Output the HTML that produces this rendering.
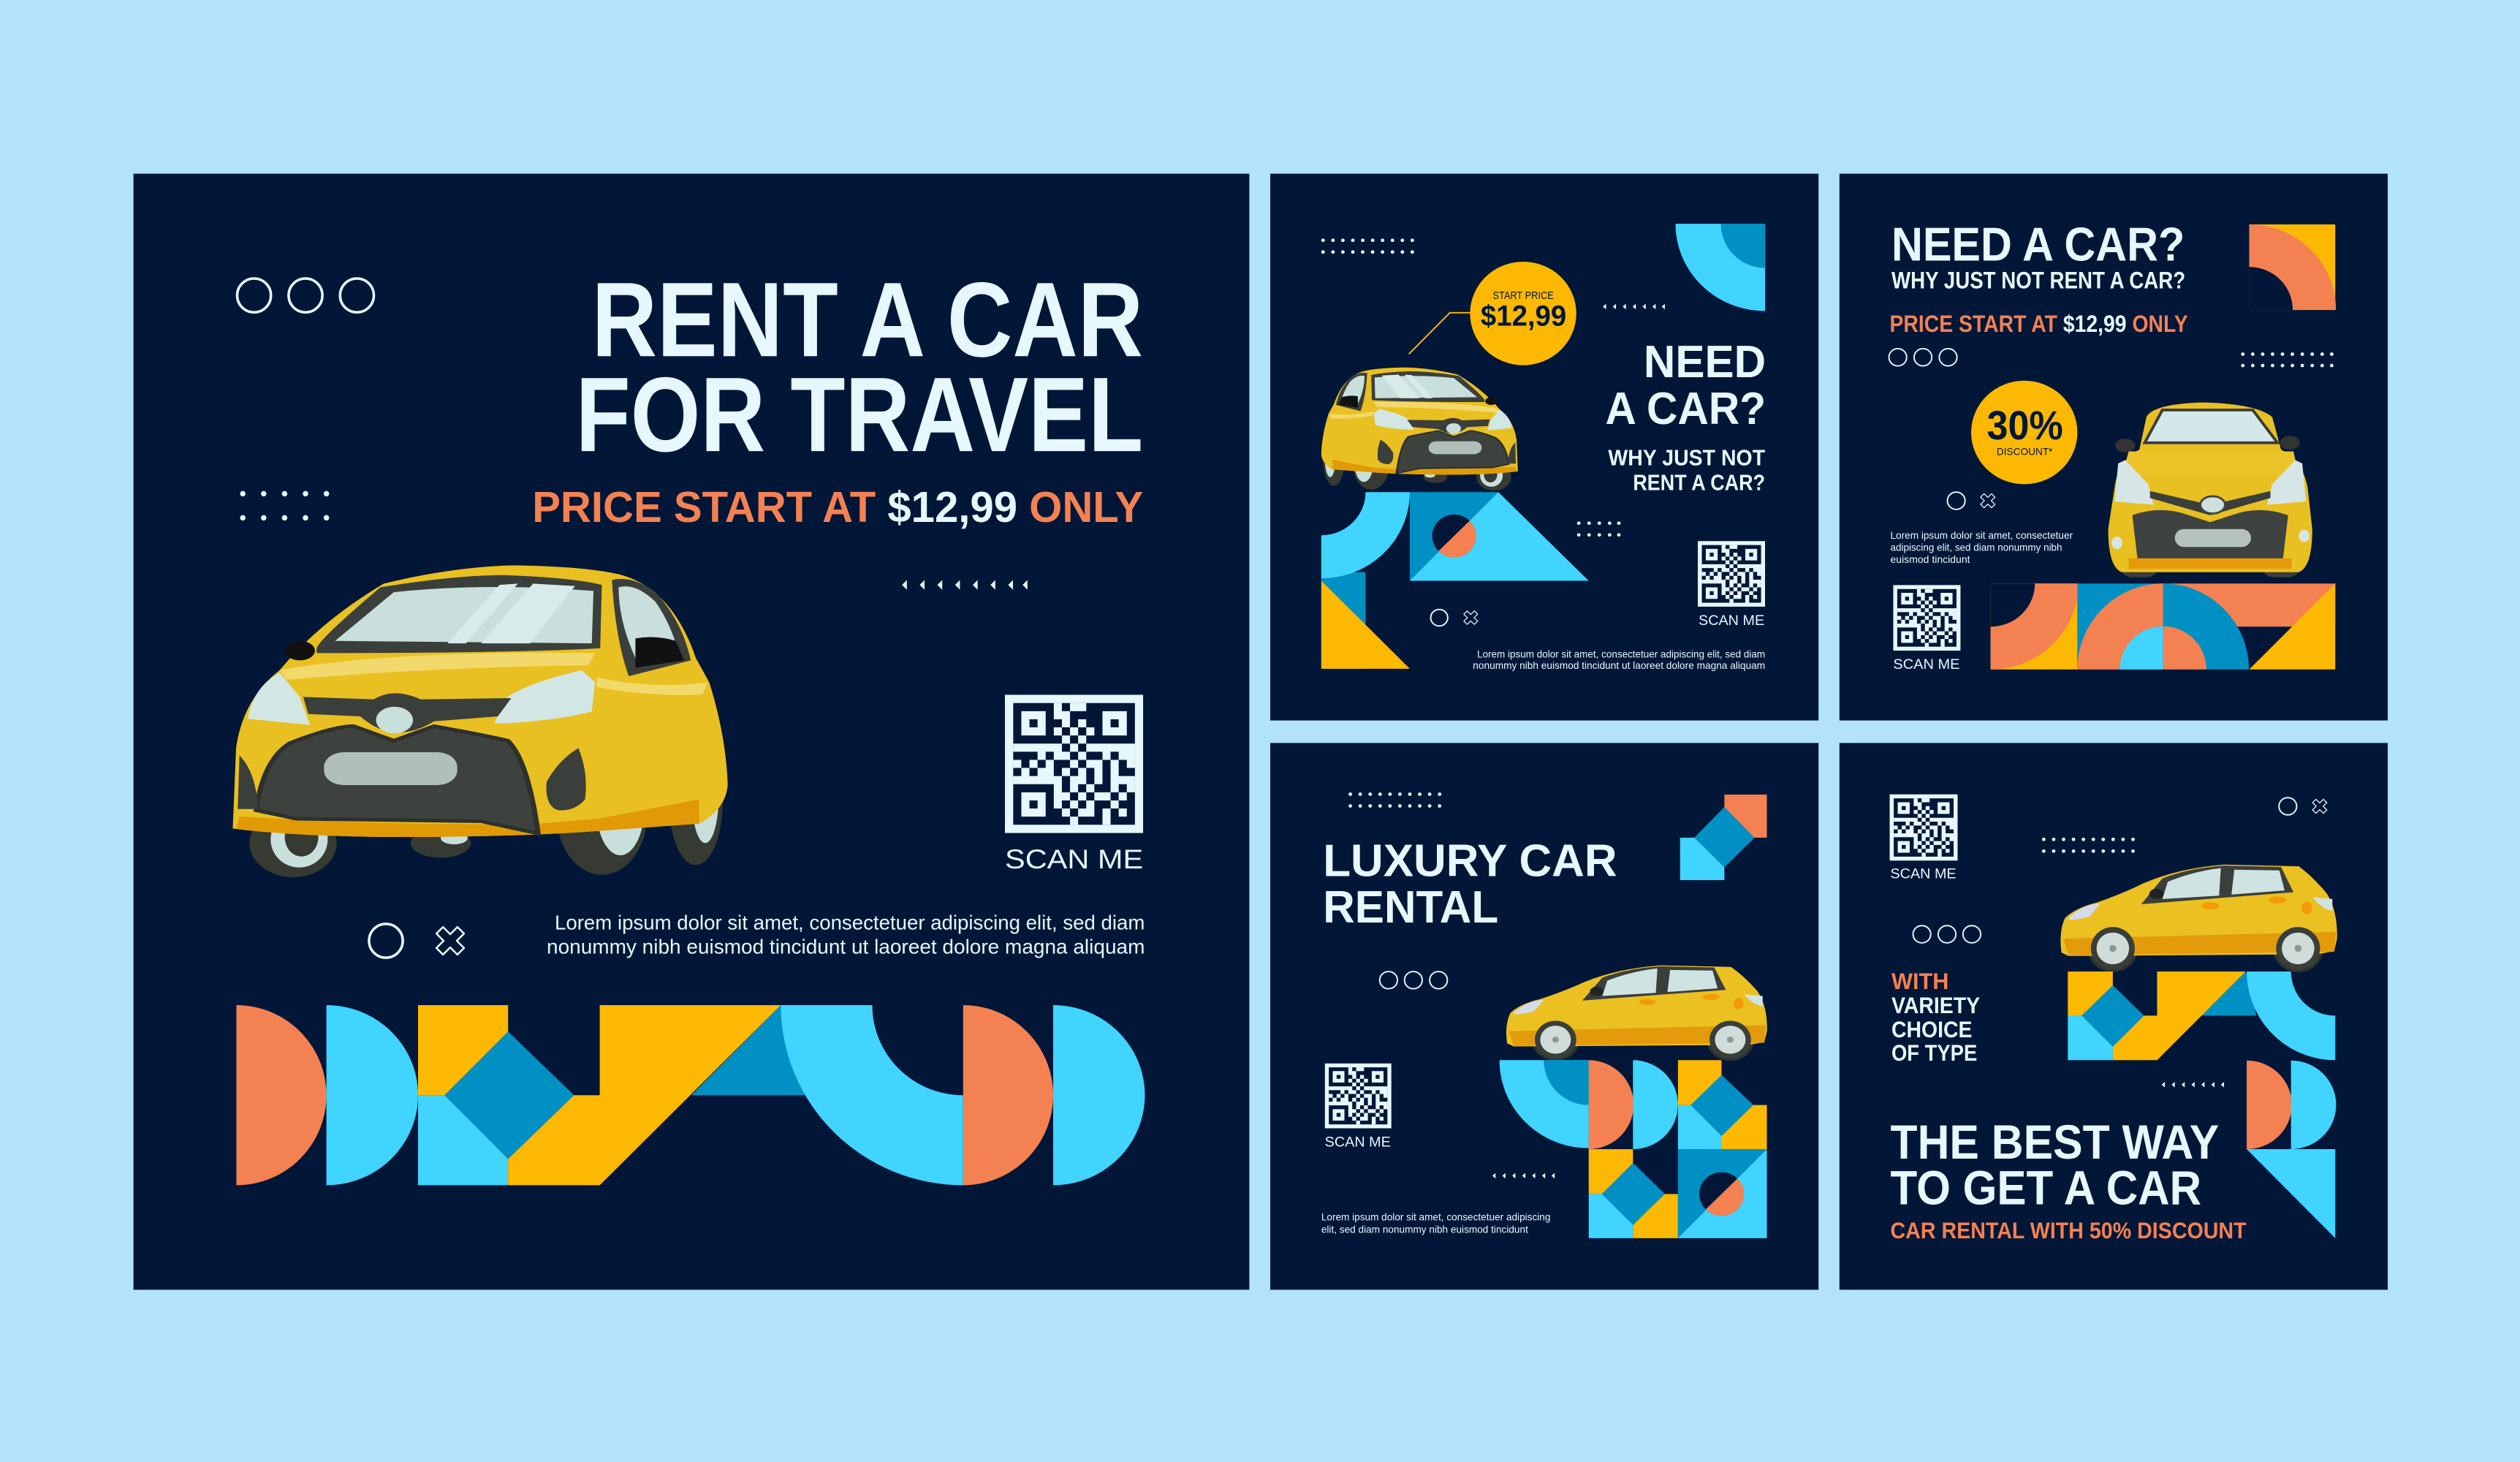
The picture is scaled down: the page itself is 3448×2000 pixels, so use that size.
<!DOCTYPE html>
<html><head><meta charset="utf-8"><style>
html,body{margin:0;padding:0;background:#b3e2fd;}
svg{display:block;}
text{font-family:"Liberation Sans",sans-serif;font-weight:bold;}
</style></head><body>
<svg width="3448" height="2000" viewBox="0 0 1567.27 909.09" preserveAspectRatio="none" xmlns="http://www.w3.org/2000/svg">
<defs>
<symbol id="qr" viewBox="0 0 100 100">
<rect width="100" height="100" fill="#e6f8fd"/>
<rect x="6" y="6" width="88" height="88" fill="#021738"/>
<g transform="translate(6,6) scale(5.867)" fill="#e6f8fd">
<path d="M5,0h1v1h-1zM7,0h2v1h-2z M1,1h3v1h-3zM5,1h2v1h-2zM11,1h3v1h-3z M1,2h1v1h-1zM3,2h1v1h-1zM6,2h1v1h-1zM8,2h1v1h-1zM11,2h1v1h-1zM13,2h1v1h-1z M1,3h3v1h-3zM5,3h1v1h-1zM7,3h1v1h-1zM9,3h1v1h-1zM11,3h3v1h-3z M6,4h1v1h-1zM8,4h1v1h-1z M0,5h6v1h-6zM7,5h1v1h-1zM9,5h6v1h-6z M3,6h1v1h-1zM5,6h2v1h-2zM8,6h1v1h-1zM11,6h1v1h-1zM13,6h2v1h-2z M0,7h1v1h-1zM2,7h1v1h-1zM4,7h1v1h-1zM7,7h1v1h-1zM9,7h2v1h-2zM12,7h1v1h-1zM14,7h1v1h-1z M1,8h1v1h-1zM3,8h2v1h-2zM6,8h1v1h-1zM8,8h1v1h-1zM10,8h1v1h-1zM12,8h1v1h-1z M0,9h6v1h-6zM7,9h2v1h-2zM10,9h1v1h-1zM12,9h3v1h-3z M5,10h1v1h-1zM7,10h1v1h-1zM9,10h1v1h-1zM12,10h1v1h-1zM14,10h1v1h-1z M1,11h3v1h-3zM5,11h2v1h-2zM8,11h1v1h-1zM10,11h2v1h-2zM13,11h1v1h-1z M1,12h1v1h-1zM3,12h1v1h-1zM5,12h1v1h-1zM7,12h1v1h-1zM9,12h1v1h-1zM12,12h1v1h-1z M1,13h3v1h-3zM6,13h1v1h-1zM8,13h2v1h-2zM11,13h1v1h-1zM13,13h1v1h-1z M7,14h1v1h-1zM11,14h1v1h-1z"/>
</g>
</symbol>
<symbol id="xi" viewBox="-1.25 -1.25 2.5 2.5" overflow="visible">
<polygon transform="rotate(45)" points="-0.33,-1.05 0.33,-1.05 0.33,-0.33 1.05,-0.33 1.05,0.33 0.33,0.33 0.33,1.05 -0.33,1.05 -0.33,0.33 -1.05,0.33 -1.05,-0.33 -0.33,-0.33" fill="none" stroke="#e6f8fd" stroke-width="0.13" stroke-linejoin="round"/>
</symbol>
<g id="car3q">
<ellipse cx="220" cy="1240" rx="130" ry="140" fill="#363a33"/>
<ellipse cx="238" cy="1225" rx="85" ry="115" fill="#c8dfdc"/>
<ellipse cx="245" cy="1215" rx="50" ry="80" fill="#363a33"/>
<ellipse cx="660" cy="1240" rx="90" ry="60" fill="#363a33"/>
<ellipse cx="700" cy="1220" rx="40" ry="25" fill="#c8dfdc"/>
<ellipse cx="1420" cy="1070" rx="80" ry="260" fill="#363a33"/>
<ellipse cx="1448" cy="1050" rx="40" ry="190" fill="#c8dfdc"/>
<ellipse cx="1140" cy="1120" rx="135" ry="250" fill="#363a33"/>
<ellipse cx="1195" cy="1090" rx="72" ry="200" fill="#c8dfdc"/>
<path d="M40,1180 L50,850 Q70,650 180,530 Q300,330 490,175 Q700,105 880,100 Q1100,105 1200,140 Q1350,200 1420,480 L1460,580 Q1510,800 1515,1000 Q1510,1100 1430,1160 L1130,1190 Q900,1215 500,1215 Q200,1210 40,1180 Z" fill="#e9c021"/>
<path d="M60,1130 Q500,1170 950,1160 L1130,1140 L1430,1060 L1430,1160 L1130,1190 Q900,1215 500,1215 Q200,1210 50,1180 Z" fill="#e09a05"/>
<path d="M290,440 Q300,400 480,190 Q700,140 850,140 Q1050,150 1140,180 L1135,440 Q900,460 290,460 Z" fill="#3b3f3b"/>
<path d="M345,410 L520,210 Q800,170 1115,205 L1110,420 Z" fill="#c8dfdc"/>
<path d="M680,420 L835,180 L890,175 L735,420 Z M780,420 L935,175 L1060,185 L925,420 Z" fill="#d8ebea"/>
<path d="M1170,160 Q1230,140 1300,210 Q1380,330 1405,490 L1220,555 Q1180,400 1170,160 Z" fill="#3b3f3b"/>
<path d="M1190,190 Q1240,170 1300,250 Q1350,350 1370,470 L1240,480 Q1190,330 1190,190 Z" fill="#c8dfdc"/>
<path d="M1240,400 Q1300,385 1360,410 L1385,490 L1240,520 Z" fill="#111"/>
<ellipse cx="240" cy="450" rx="45" ry="40" fill="#111"/>
<path d="M180,530 Q500,450 1120,460 L1100,510 Q600,520 200,570 Z" fill="#f2d96b"/>
<path d="M1125,560 Q1300,610 1455,580 L1440,630 Q1280,640 1125,600 Z" fill="#f2d96b"/>
<path d="M180,540 Q100,600 85,730 L270,755 L240,640 Z" fill="#d2e6e4"/>
<path d="M1080,530 Q900,590 850,650 L820,750 Q1000,740 1110,700 L1120,580 Z" fill="#d2e6e4"/>
<path d="M250,640 L460,650 Q520,600 600,650 L870,645 L830,720 L640,740 Q520,840 420,720 L265,710 Z" fill="#3b3f3b"/>
<circle cx="522" cy="735" r="55" fill="#c8dfdc"/>
<path d="M210,830 Q340,760 400,760 L520,820 L640,760 Q800,800 860,820 Q920,900 950,1200 L780,1150 L230,1140 L110,1105 Q130,900 210,830 Z" fill="#3e423e" stroke="#2d302d" stroke-width="15"/>
<rect x="312" y="867" width="397" height="135" rx="60" fill="#b1bfba"/>
<path d="M60,880 Q110,950 115,1100 L55,1100 Z" fill="#3b3f3b"/>
<path d="M1070,850 Q1100,950 1090,1060 Q1060,1110 1010,1105 Q970,1090 975,990 Q1010,900 1070,850 Z" fill="#3b3f3b"/>
</g>
<g id="carside">
<circle cx="765" cy="585" r="72" fill="#2f332f"/>
<circle cx="1288" cy="585" r="72" fill="#2f332f"/>
<path d="M620,600 Q612,540 630,500 Q660,470 720,455 Q790,430 850,400 Q950,355 1080,345 L1290,350 Q1330,380 1370,430 Q1400,480 1398,560 L1390,595 Q1350,605 1330,605 L640,610 Z" fill="#ebc021"/>
<path d="M625,560 L1395,540 L1390,598 L640,608 Z" fill="#e39b0c"/>
<path d="M845,460 L905,385 Q980,355 1080,348 L1240,352 L1275,425 Z" fill="#3b3f3b"/>
<path d="M905,445 L920,395 Q990,365 1070,355 L1065,435 Z" fill="#cfe4e2"/>
<path d="M1100,432 L1108,360 L1235,362 L1250,420 Z" fill="#cfe4e2"/>
<ellipse cx="888" cy="430" rx="20" ry="15" fill="#222"/>
<path d="M640,500 Q680,460 730,458 L700,495 Q670,505 640,505 Z" fill="#d4dbef"/>
<path d="M1330,440 L1385,445 L1385,480 Q1350,470 1330,440 Z" fill="#cfe4e2"/>
<ellipse cx="1313" cy="470" rx="15" ry="18" fill="#f29b05"/>
<ellipse cx="1040" cy="465" rx="25" ry="10" fill="#f29b05"/>
<ellipse cx="1230" cy="448" rx="25" ry="10" fill="#f29b05"/>
<circle cx="765" cy="588" r="62" fill="#3a3e38"/>
<circle cx="765" cy="588" r="46" fill="#cfdcd9"/>
<circle cx="765" cy="588" r="10" fill="#8a9893"/>
<circle cx="1288" cy="588" r="62" fill="#3a3e38"/>
<circle cx="1288" cy="588" r="46" fill="#cfdcd9"/>
<circle cx="1288" cy="588" r="10" fill="#8a9893"/>
</g>
</defs>

<rect width="1567.27" height="909.09" fill="#b3e2fd"/>

<!-- BIG PANEL -->
<rect x="83" y="108" width="694" height="694" fill="#021738"/>
<g fill="none" stroke="#e6f8fd" stroke-width="1.6">
<circle cx="158" cy="183.7" r="10.5"/><circle cx="190" cy="183.7" r="10.5"/><circle cx="222" cy="183.7" r="10.5"/>
<circle cx="240" cy="585" r="10.5"/>
</g>
<use href="#xi" x="269" y="574" width="22" height="22"/>
<g fill="#e6f8fd">
<circle cx="151" cy="307" r="1.7"/><circle cx="164" cy="307" r="1.7"/><circle cx="177" cy="307" r="1.7"/><circle cx="190" cy="307" r="1.7"/><circle cx="203" cy="307" r="1.7"/>
<circle cx="151" cy="322" r="1.7"/><circle cx="164" cy="322" r="1.7"/><circle cx="177" cy="322" r="1.7"/><circle cx="190" cy="322" r="1.7"/><circle cx="203" cy="322" r="1.7"/>
<path d="M561,363.7l3,-3v6z M572,363.7l3,-3v6z M583,363.7l3,-3v6z M594,363.7l3,-3v6z M605,363.7l3,-3v6z M616,363.7l3,-3v6z M627,363.7l3,-3v6z M636,363.7l3,-3v6z"/>
</g>
<text x="711" y="221.5" text-anchor="end" font-size="66" fill="#e6f8fd" textLength="343" lengthAdjust="spacingAndGlyphs">RENT A CAR</text>
<text x="711" y="280.5" text-anchor="end" font-size="66" fill="#e6f8fd" textLength="353" lengthAdjust="spacingAndGlyphs">FOR TRAVEL</text>
<text x="711" y="324.5" text-anchor="end" font-size="27" fill="#f48152" textLength="380" lengthAdjust="spacingAndGlyphs">PRICE  START AT <tspan fill="#e6f8fd">$12,99</tspan> ONLY</text>
<g transform="translate(136.4,336.4) scale(0.2087,0.1515)"><use href="#car3q"/></g>
<use href="#qr" x="625" y="432" width="86" height="86"/>
<text x="668" y="540" text-anchor="middle" font-size="17" fill="#e6f8fd" textLength="86" lengthAdjust="spacingAndGlyphs" style="font-weight:normal">SCAN ME</text>
<text x="712" y="578" text-anchor="end" font-size="12.5" fill="#e6f8fd" textLength="367" lengthAdjust="spacingAndGlyphs" style="font-weight:normal">Lorem ipsum dolor sit amet, consectetuer adipiscing elit, sed diam</text>
<text x="712" y="593" text-anchor="end" font-size="12.5" fill="#e6f8fd" textLength="372" lengthAdjust="spacingAndGlyphs" style="font-weight:normal">nonummy nibh euismod tincidunt ut laoreet dolore magna aliquam</text>
<path d="M147,625 A56,56 0 0 1 147,737 Z" fill="#f48152"/>
<path d="M203,625 A57,56 0 0 1 203,737 Z" fill="#40d4fe"/>
<polygon points="260,625 316,625 316,641.5 276.5,681 260,681" fill="#fdb902"/>
<polygon points="316,641.5 357,681 316,720.7 276.5,681" fill="#0090c4"/>
<polygon points="260,681 276.5,681 316,720.7 316,737 260,737" fill="#40d4fe"/>
<polygon points="373,625 485.6,625 373,737 316,737 316,720.7 357,681 373,681" fill="#fdb902"/>
<polygon points="485.6,625 430,681 502,681 490,640" fill="#0090c4"/>
<path d="M485.6,625 L542.5,625 A56.5,56 0 0 0 599,681 L599,737 A113.5,112 0 0 1 485.6,625 Z" fill="#40d4fe"/>
<path d="M599,625 A56,56 0 0 1 599,737 Z" fill="#f48152"/>
<path d="M655,625 A57,56 0 0 1 655,737 Z" fill="#40d4fe"/>

<!-- PANEL 2 -->
<rect x="790" y="108" width="341" height="340" fill="#021738"/>
<g transform="translate(790.9,109.1) scale(0.2203,0.2145)">
<g fill="#e6f8fd">
<circle cx="145" cy="188" r="5"/><circle cx="173" cy="188" r="5"/><circle cx="201" cy="188" r="5"/><circle cx="229" cy="188" r="5"/><circle cx="257" cy="188" r="5"/><circle cx="285" cy="188" r="5"/><circle cx="313" cy="188" r="5"/><circle cx="341" cy="188" r="5"/><circle cx="369" cy="188" r="5"/><circle cx="397" cy="188" r="5"/>
<circle cx="145" cy="222" r="5"/><circle cx="173" cy="222" r="5"/><circle cx="201" cy="222" r="5"/><circle cx="229" cy="222" r="5"/><circle cx="257" cy="222" r="5"/><circle cx="285" cy="222" r="5"/><circle cx="313" cy="222" r="5"/><circle cx="341" cy="222" r="5"/><circle cx="369" cy="222" r="5"/><circle cx="397" cy="222" r="5"/>
<circle cx="867" cy="1008" r="5"/><circle cx="896" cy="1008" r="5"/><circle cx="925" cy="1008" r="5"/><circle cx="954" cy="1008" r="5"/><circle cx="980" cy="1008" r="5"/>
<circle cx="867" cy="1042" r="5"/><circle cx="896" cy="1042" r="5"/><circle cx="925" cy="1042" r="5"/><circle cx="954" cy="1042" r="5"/><circle cx="980" cy="1042" r="5"/>
<path d="M935,380l9,-8v16z M963,380l9,-8v16z M991,380l9,-8v16z M1019,380l9,-8v16z M1047,380l9,-8v16z M1075,380l9,-8v16z M1101,380l9,-8v16z"/>
</g>
<polyline points="387,518 503,398 565,398" fill="none" stroke="#fdb902" stroke-width="4"/>
<circle cx="710" cy="400" r="150" fill="#fdb902"/>
<text x="710" y="358" text-anchor="middle" font-size="31" fill="#021738" textLength="172" lengthAdjust="spacingAndGlyphs" style="font-weight:normal">START PRICE</text>
<text x="711" y="435" text-anchor="middle" font-size="84" fill="#021738" textLength="242" lengthAdjust="spacingAndGlyphs">$12,99</text>
<path d="M1393,140 L1393,393 A253,253 0 0 1 1140,140 Z" fill="#40d4fe"/>
<path d="M1393,140 L1393,268 A125,128 0 0 1 1268,140 Z" fill="#0090c4"/>
<text x="1395" y="585" text-anchor="end" font-size="132" fill="#e6f8fd" textLength="345" lengthAdjust="spacingAndGlyphs">NEED</text>
<text x="1395" y="720" text-anchor="end" font-size="132" fill="#e6f8fd" textLength="453" lengthAdjust="spacingAndGlyphs">A CAR?</text>
<text x="1393" y="840" text-anchor="end" font-size="64" fill="#e6f8fd" textLength="443" lengthAdjust="spacingAndGlyphs">WHY JUST NOT</text>
<text x="1393" y="912" text-anchor="end" font-size="64" fill="#e6f8fd" textLength="373" lengthAdjust="spacingAndGlyphs">RENT A CAR?</text>
<use href="#qr" x="1203" y="1057" width="190" height="196"/>
<text x="1298" y="1303" text-anchor="middle" font-size="42" fill="#e6f8fd" textLength="186" lengthAdjust="spacingAndGlyphs" style="font-weight:normal">SCAN ME</text>
<circle cx="473" cy="1282" r="24" fill="none" stroke="#e6f8fd" stroke-width="4"/>
<use href="#xi" x="537" y="1257" width="50" height="50"/>
<text x="1393" y="1397" text-anchor="end" font-size="29" fill="#e6f8fd" textLength="813" lengthAdjust="spacingAndGlyphs" style="font-weight:normal">Lorem ipsum dolor sit amet, consectetuer adipiscing elit, sed diam</text>
<text x="1393" y="1430" text-anchor="end" font-size="29" fill="#e6f8fd" textLength="825" lengthAdjust="spacingAndGlyphs" style="font-weight:normal">nonummy nibh euismod tincidunt ut laoreet dolore magna aliquam</text>
<g transform="translate(710,528.5) scale(-0.3763,0.279)"><use href="#car3q"/></g>
<rect x="140" y="1150" width="125" height="280" fill="#0090c4"/>
<polygon points="140,1175 390,1430 140,1430" fill="#fdb902"/>
<path d="M140,918 L390,918 A250,250 0 0 1 140,1168 L140,1043 A125,125 0 0 0 265,918 Z" fill="#40d4fe"/>
<rect x="390" y="918" width="250" height="257" fill="#0090c4"/>
<polygon points="640,918 895,1175 390,1175" fill="#40d4fe"/>
<circle cx="515" cy="1045" r="62" fill="#021738"/>
<path d="M559,1001 A62,62 0 0 1 471,1089 Z" fill="#f48152"/>
</g>

<!-- PANEL 3 -->
<rect x="1144" y="108" width="341" height="340" fill="#021738"/>
<g transform="translate(1145.5,109.1) scale(0.2203,0.2145)">
<text x="140" y="247" font-size="138" fill="#e6f8fd" textLength="828" lengthAdjust="spacingAndGlyphs">NEED A CAR?</text>
<text x="140" y="327" font-size="68" fill="#e6f8fd" textLength="830" lengthAdjust="spacingAndGlyphs">WHY JUST NOT RENT A CAR?</text>
<text x="135" y="453" font-size="68" fill="#f48152" textLength="842" lengthAdjust="spacingAndGlyphs">PRICE  START AT <tspan fill="#e6f8fd">$12,99</tspan> ONLY</text>
<rect x="1150" y="142" width="243" height="248" fill="#fdb902"/>
<path d="M1150,390 L1150,142 A245,248 0 0 1 1395,390 Z" fill="#f48152"/>
<path d="M1150,390 L1150,265 A123,125 0 0 1 1273,390 Z" fill="#021738"/>
<g fill="none" stroke="#e6f8fd" stroke-width="4">
<circle cx="158" cy="527" r="25"/><circle cx="229" cy="527" r="25"/><circle cx="300" cy="527" r="25"/>
<circle cx="323" cy="943" r="25"/>
</g>
<use href="#xi" x="386" y="917" width="52" height="52"/>
<g fill="#e6f8fd">
<circle cx="1132" cy="518" r="5"/><circle cx="1160" cy="518" r="5"/><circle cx="1188" cy="518" r="5"/><circle cx="1216" cy="518" r="5"/><circle cx="1244" cy="518" r="5"/><circle cx="1272" cy="518" r="5"/><circle cx="1300" cy="518" r="5"/><circle cx="1328" cy="518" r="5"/><circle cx="1356" cy="518" r="5"/><circle cx="1383" cy="518" r="5"/>
<circle cx="1132" cy="551" r="5"/><circle cx="1160" cy="551" r="5"/><circle cx="1188" cy="551" r="5"/><circle cx="1216" cy="551" r="5"/><circle cx="1244" cy="551" r="5"/><circle cx="1272" cy="551" r="5"/><circle cx="1300" cy="551" r="5"/><circle cx="1328" cy="551" r="5"/><circle cx="1356" cy="551" r="5"/><circle cx="1383" cy="551" r="5"/>
</g>
<circle cx="515" cy="745" r="150" fill="#fdb902"/>
<text x="517" y="765" text-anchor="middle" font-size="118" fill="#021738" textLength="215" lengthAdjust="spacingAndGlyphs">30%</text>
<text x="516" y="810" text-anchor="middle" font-size="30" fill="#021738" textLength="158" lengthAdjust="spacingAndGlyphs" style="font-weight:normal">DISCOUNT*</text>
<text x="137" y="1053" font-size="29" fill="#e6f8fd" textLength="515" lengthAdjust="spacingAndGlyphs" style="font-weight:normal">Lorem ipsum dolor sit amet, consectetuer</text>
<text x="137" y="1088" font-size="29" fill="#e6f8fd" textLength="485" lengthAdjust="spacingAndGlyphs" style="font-weight:normal">adipiscing elit, sed diam nonummy nibh</text>
<text x="137" y="1123" font-size="29" fill="#e6f8fd" textLength="225" lengthAdjust="spacingAndGlyphs" style="font-weight:normal">euismod tincidunt</text>
<use href="#qr" x="145" y="1185" width="190" height="195"/>
<text x="145" y="1430" font-size="42" fill="#e6f8fd" textLength="188" lengthAdjust="spacingAndGlyphs" style="font-weight:normal">SCAN ME</text>
<g>
<rect x="785" y="1080" width="110" height="85" rx="35" fill="#3a3d3a"/>
<rect x="1185" y="1080" width="110" height="85" rx="35" fill="#3a3d3a"/>
<ellipse cx="800" cy="783" rx="28" ry="20" fill="#333"/>
<ellipse cx="1265" cy="775" rx="28" ry="20" fill="#333"/>
<path d="M770,905 Q780,825 840,795 L860,700 Q880,662 1020,658 Q1170,662 1215,700 L1240,795 Q1300,825 1315,905 L1328,1025 Q1328,1135 1290,1150 L790,1150 Q752,1135 752,1025 Z" fill="#e9c021"/>
<path d="M810,800 L1275,800 L1290,870 L790,870 Z" fill="#ecc429"/>
<polygon points="855,775 905,680 1160,680 1230,775" fill="#d3e8e8" stroke="#3b3b3b" stroke-width="8"/>
<path d="M780,835 L800,825 L865,895 L880,955 L770,945 Z" fill="#d6e6e6"/>
<path d="M1300,835 L1280,825 L1215,895 L1200,955 L1310,945 Z" fill="#d6e6e6"/>
<path d="M820,985 Q900,955 980,985 L1040,1005 L1100,985 Q1180,955 1260,985 L1245,1115 L835,1115 Z" fill="#3e4341"/>
<path d="M870,915 L1040,955 L1210,915 L1210,935 L1040,985 L870,935 Z" fill="#3b3f3b"/>
<rect x="940" y="1025" width="215" height="52" rx="26" fill="#b6c2bd"/>
<ellipse cx="1047" cy="955" rx="35" ry="25" fill="#cfe0df" stroke="#3e4341" stroke-width="6"/>
<rect x="810" y="1110" width="460" height="30" fill="#e59a0a"/>
<ellipse cx="777" cy="1065" rx="15" ry="18" fill="#d6e6e6"/>
<ellipse cx="1305" cy="1045" rx="15" ry="18" fill="#d6e6e6"/>
</g>
<rect x="420" y="1183" width="245" height="249" fill="#fdb902"/>
<path d="M420,1183 L668,1183 A248,249 0 0 1 420,1432 Z" fill="#f48152"/>
<path d="M420,1183 L545,1183 A125,125 0 0 1 420,1308 Z" fill="#021738"/>
<rect x="665" y="1183" width="242" height="249" fill="#0090c4"/>
<path d="M907,1432 L665,1432 A242,249 0 0 1 907,1183 Z" fill="#f48152"/>
<path d="M907,1432 L785,1432 A122,125 0 0 1 907,1307 Z" fill="#40d4fe"/>
<rect x="907" y="1183" width="486" height="125" fill="#f48152"/>
<path d="M907,1432 L907,1183 A242,249 0 0 1 1149,1432 Z" fill="#0090c4"/>
<path d="M907,1432 L907,1307 A122,125 0 0 1 1029,1432 Z" fill="#f48152"/>
<polygon points="1393,1183 1393,1432 1150,1432" fill="#fdb902"/>
</g>

<!-- PANEL 4 -->
<rect x="790" y="462" width="341" height="340" fill="#021738"/>
<g transform="translate(790.9,463.6) scale(0.2203,0.2145)">
<g fill="#e6f8fd">
<circle cx="222" cy="141" r="5"/><circle cx="250" cy="141" r="5"/><circle cx="278" cy="141" r="5"/><circle cx="306" cy="141" r="5"/><circle cx="334" cy="141" r="5"/><circle cx="362" cy="141" r="5"/><circle cx="390" cy="141" r="5"/><circle cx="418" cy="141" r="5"/><circle cx="446" cy="141" r="5"/><circle cx="474" cy="141" r="5"/>
<circle cx="222" cy="175" r="5"/><circle cx="250" cy="175" r="5"/><circle cx="278" cy="175" r="5"/><circle cx="306" cy="175" r="5"/><circle cx="334" cy="175" r="5"/><circle cx="362" cy="175" r="5"/><circle cx="390" cy="175" r="5"/><circle cx="418" cy="175" r="5"/><circle cx="446" cy="175" r="5"/><circle cx="474" cy="175" r="5"/>
<path d="M623,1247l9,-8v16z M651,1247l9,-8v16z M679,1247l9,-8v16z M707,1247l9,-8v16z M735,1247l9,-8v16z M763,1247l9,-8v16z M790,1247l9,-8v16z"/>
</g>
<text x="145" y="378" font-size="132" fill="#e6f8fd" textLength="830" lengthAdjust="spacingAndGlyphs">LUXURY CAR</text>
<text x="145" y="513" font-size="132" fill="#e6f8fd" textLength="495" lengthAdjust="spacingAndGlyphs">RENTAL</text>
<rect x="1278" y="142" width="120" height="125" fill="#f48152"/>
<rect x="1153" y="267" width="125" height="123" fill="#40d4fe"/>
<polygon points="1193,267 1278,178 1363,267 1278,353" fill="#0090c4"/>
<g fill="none" stroke="#e6f8fd" stroke-width="4">
<circle cx="330" cy="680" r="25"/><circle cx="400" cy="680" r="25"/><circle cx="471" cy="680" r="25"/>
</g>
<g transform="translate(80,331.2) scale(0.943,0.887)"><use href="#carside"/></g>
<use href="#qr" x="150" y="918" width="188" height="195"/>
<text x="150" y="1163" font-size="42" fill="#e6f8fd" textLength="186" lengthAdjust="spacingAndGlyphs" style="font-weight:normal">SCAN ME</text>
<text x="140" y="1377" font-size="29" fill="#e6f8fd" textLength="647" lengthAdjust="spacingAndGlyphs" style="font-weight:normal">Lorem ipsum dolor sit amet, consectetuer adipiscing</text>
<text x="140" y="1413" font-size="29" fill="#e6f8fd" textLength="584" lengthAdjust="spacingAndGlyphs" style="font-weight:normal">elit, sed diam nonummy nibh euismod tincidunt</text>
<path d="M895,912 L895,1167 A252,255 0 0 1 643,912 Z" fill="#40d4fe"/>
<path d="M895,912 L895,1042 A127,130 0 0 1 768,912 Z" fill="#0090c4"/>
<path d="M895,912 A127,129 0 0 1 895,1170 Z" fill="#f48152"/>
<path d="M1020,912 A127,129 0 0 1 1020,1170 Z" fill="#40d4fe"/>
<rect x="1147" y="912" width="123" height="130" fill="#fdb902"/>
<rect x="1147" y="1042" width="123" height="128" fill="#40d4fe"/>
<rect x="1270" y="1042" width="128" height="128" fill="#fdb902"/>
<polygon points="1183,1042 1270,955 1360,1042 1270,1132" fill="#0090c4"/>
<rect x="895" y="1170" width="125" height="130" fill="#fdb902"/>
<rect x="895" y="1300" width="125" height="128" fill="#40d4fe"/>
<rect x="1020" y="1300" width="127" height="128" fill="#fdb902"/>
<polygon points="932,1300 1020,1210 1110,1300 1020,1390" fill="#0090c4"/>
<rect x="1147" y="1170" width="251" height="258" fill="#0090c4"/>
<polygon points="1398,1170 1398,1428 1147,1428" fill="#40d4fe"/>
<circle cx="1270" cy="1300" r="63" fill="#021738"/>
<path d="M1315,1255 A63,63 0 0 1 1225,1345 Z" fill="#f48152"/>
</g>

<!-- PANEL 5 -->
<rect x="1144" y="462" width="341" height="340" fill="#021738"/>
<g transform="translate(1145.5,463.6) scale(0.2203,0.2145)">
<use href="#qr" x="135" y="140" width="192" height="195"/>
<text x="137" y="385" font-size="42" fill="#e6f8fd" textLength="186" lengthAdjust="spacingAndGlyphs" style="font-weight:normal">SCAN ME</text>
<g fill="none" stroke="#e6f8fd" stroke-width="4">
<circle cx="1259" cy="176" r="25"/>
<circle cx="226" cy="547" r="25"/><circle cx="297" cy="547" r="25"/><circle cx="367" cy="547" r="25"/>
</g>
<use href="#xi" x="1323" y="150" width="52" height="52"/>
<g fill="#e6f8fd">
<circle cx="570" cy="272" r="5"/><circle cx="598" cy="272" r="5"/><circle cx="626" cy="272" r="5"/><circle cx="654" cy="272" r="5"/><circle cx="682" cy="272" r="5"/><circle cx="710" cy="272" r="5"/><circle cx="738" cy="272" r="5"/><circle cx="766" cy="272" r="5"/><circle cx="794" cy="272" r="5"/><circle cx="822" cy="272" r="5"/>
<circle cx="570" cy="306" r="5"/><circle cx="598" cy="306" r="5"/><circle cx="626" cy="306" r="5"/><circle cx="654" cy="306" r="5"/><circle cx="682" cy="306" r="5"/><circle cx="710" cy="306" r="5"/><circle cx="738" cy="306" r="5"/><circle cx="766" cy="306" r="5"/><circle cx="794" cy="306" r="5"/><circle cx="822" cy="306" r="5"/>
<path d="M903,983l9,-8v16z M931,983l9,-8v16z M959,983l9,-8v16z M987,983l9,-8v16z M1015,983l9,-8v16z M1043,983l9,-8v16z M1070,983l9,-8v16z"/>
</g>
<use href="#carside"/>
<text x="140" y="706" font-size="66" fill="#f48152" textLength="162" lengthAdjust="spacingAndGlyphs">WITH</text>
<text x="140" y="776" font-size="66" fill="#e6f8fd" textLength="250" lengthAdjust="spacingAndGlyphs">VARIETY</text>
<text x="140" y="846" font-size="66" fill="#e6f8fd" textLength="228" lengthAdjust="spacingAndGlyphs">CHOICE</text>
<text x="140" y="914" font-size="66" fill="#e6f8fd" textLength="242" lengthAdjust="spacingAndGlyphs">OF TYPE</text>
<rect x="638" y="655" width="127" height="128" fill="#fdb902"/>
<rect x="638" y="783" width="127" height="129" fill="#40d4fe"/>
<polygon points="677,783 765,695 853,783 765,873" fill="#0090c4"/>
<polygon points="1140,655 1015,783 1170,783 1150,680" fill="#0090c4"/>
<polygon points="890,655 1140,655 890,912 765,912 765,873 853,783 890,783" fill="#fdb902"/>
<path d="M1143,655 L1268,655 A125,128 0 0 0 1393,783 L1393,912 A250,257 0 0 1 1143,655 Z" fill="#40d4fe"/>
<path d="M1143,913 A127,128 0 0 1 1143,1170 Z" fill="#f48152"/>
<path d="M1268,913 A127,128 0 0 1 1268,1170 Z" fill="#40d4fe"/>
<polygon points="1143,1170 1393,1170 1393,1428" fill="#40d4fe"/>
<text x="137" y="1197" font-size="140" fill="#e6f8fd" textLength="928" lengthAdjust="spacingAndGlyphs">THE BEST WAY</text>
<text x="137" y="1330" font-size="140" fill="#e6f8fd" textLength="878" lengthAdjust="spacingAndGlyphs">TO GET A CAR</text>
<text x="137" y="1428" font-size="66" fill="#f48152" textLength="1005" lengthAdjust="spacingAndGlyphs">CAR RENTAL WITH 50% DISCOUNT</text>
</g>
</svg>
</body></html>
